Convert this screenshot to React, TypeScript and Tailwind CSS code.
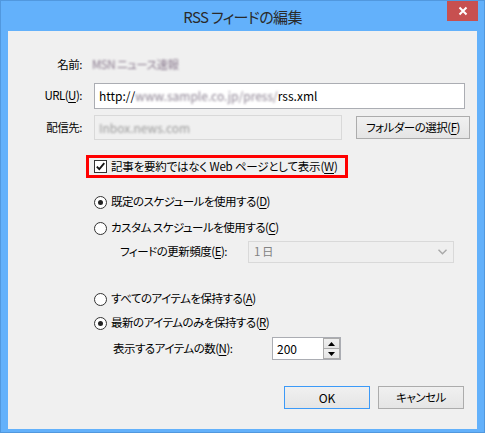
import React from "react";

function U({ children }: { children: React.ReactNode }) {
  return <span className="underline underline-offset-[2px]">{children}</span>;
}

function Radio({ checked, children }: { checked?: boolean; children: React.ReactNode }) {
  return (
    <div className="ml-[86px] h-[20px] flex items-center">
      <div className="w-[13px] h-[13px] shrink-0 rounded-full border border-[#333] bg-white flex items-center justify-center">
        {checked && <div className="w-[5px] h-[5px] rounded-full bg-[#222]" />}
      </div>
      <span className="ml-[4px] whitespace-nowrap">{children}</span>
    </div>
  );
}

function Btn({ children, def, w }: { children: React.ReactNode; def?: boolean; w: string }) {
  return (
    <div
      className={
        (def ? "border-[#3c9af8] " : "border-[#acacac] ") +
        w +
        " h-[23px] border bg-linear-to-b from-[#f0f0f0] to-[#e5e5e5] flex items-center justify-center whitespace-nowrap"
      }
    >
      {children}
    </div>
  );
}

export default function App() {
  return (
    <div className="w-[485px] h-[433px] bg-[#63b1fb] border border-[#5198de] flex flex-col font-['Noto_Sans_CJK_JP','Noto_Sans',sans-serif] [font-feature-settings:'palt'] text-[11.5px] tracking-[-0.5px] text-black leading-none">
      <div className="h-[30px] grid grid-cols-[1fr_auto_1fr] items-start shrink-0">
        <div />
        <div className="text-[15px] tracking-[-0.6px] leading-[32px] text-[#2a2a2a]">RSS フィードの編集</div>
        <div className="flex justify-end pr-[6px]">
          <div className="w-[31px] h-[20px] bg-[#c75050] flex items-center justify-center">
            <svg width="10" height="10" viewBox="0 0 10 10">
              <path d="M1.5 1.5 L8.5 8.5 M8.5 1.5 L1.5 8.5" stroke="white" strokeWidth="2" />
            </svg>
          </div>
        </div>
      </div>
      <div className="mx-[7px] mb-[3px] flex-1 bg-[#f0f0f0] flex flex-col pt-[24px]">
        {/* 名前 */}
        <div className="h-[20px] flex items-center">
          <div className="w-[74px] text-right">名前:</div>
          <div className="ml-[10px] text-[#8a7a8e] blur-[1.2px]">MSN ニュース速報</div>
        </div>
        {/* URL */}
        <div className="mt-[8px] h-[26px] flex items-center">
          <div className="w-[74px] text-right">
            URL(<U>U</U>):
          </div>
          <div className="ml-[12px] w-[371px] h-[26px] bg-white border border-[#abadb3] flex items-center pl-[4px] text-[12px] tracking-normal">
            <span>http://</span>
            <span className="text-[#8c8292] blur-[1.3px]">www.sample.co.jp/press/</span>
            <span>rss.xml</span>
          </div>
        </div>
        {/* 配信先 */}
        <div className="mt-[6px] h-[25px] flex items-center">
          <div className="w-[74px] text-right">配信先:</div>
          <div className="ml-[12px] w-[248px] h-[25px] bg-[#f0f0f0] border border-[#d9d9d9] flex items-center pl-[4px] text-[12px] tracking-normal">
            <span className="text-[#9a9a9a] blur-[1.3px]">Inbox.news.com</span>
          </div>
          <div className="ml-[14px]">
            <Btn w="w-[114px]">
              フォルダーの選択(<U>F</U>)
            </Btn>
          </div>
        </div>
        {/* red box */}
        <div className="mt-[15px] ml-[78px] w-[262px] h-[23px] border-[3px] border-[#ff0000] flex items-center pl-[5px]">
          <div className="w-[13px] h-[13px] shrink-0 border border-[#333] bg-white flex items-center justify-center">
            <svg width="11" height="11" viewBox="0 0 11 11">
              <path d="M1.8 5.6 L4.3 8.2 L9.3 2.2" stroke="#111" strokeWidth="1.8" fill="none" />
            </svg>
          </div>
          <span className="ml-[4px] whitespace-nowrap tracking-[-0.2px]">
            記事を要約ではなく Web ページとして表示(<U>W</U>)
          </span>
        </div>
        <div className="mt-[14px]">
          <Radio checked>
            既定のスケジュールを使用する(<U>D</U>)
          </Radio>
        </div>
        <div className="mt-[6px]">
          <Radio>
            カスタム スケジュールを使用する(<U>C</U>)
          </Radio>
        </div>
        {/* select */}
        <div className="mt-[3px] h-[22px] flex items-center">
          <div className="ml-[112px] w-[128px] whitespace-nowrap">
            フィードの更新頻度(<U>E</U>):
          </div>
          <div className="w-[206px] h-[22px] border border-[#d9d9d9] bg-[#efefef] flex items-center justify-between pl-[5px] pr-[6px] text-[#838383]">
            <span>1 日</span>
            <svg width="9" height="6" viewBox="0 0 9 6">
              <path d="M0.5 0.8 L4.5 4.8 L8.5 0.8" stroke="#a8a8a8" strokeWidth="1.4" fill="none" />
            </svg>
          </div>
        </div>
        <div className="mt-[26px]">
          <Radio>
            すべてのアイテムを保持する(<U>A</U>)
          </Radio>
        </div>
        <div className="mt-[4px]">
          <Radio checked>
            最新のアイテムのみを保持する(<U>R</U>)
          </Radio>
        </div>
        {/* spin */}
        <div className="mt-[4px] h-[23px] flex items-center">
          <div className="ml-[105px] w-[159px] whitespace-nowrap">
            表示するアイテムの数(<U>N</U>):
          </div>
          <div className="w-[69px] h-[23px] bg-white border border-[#abadb3] flex">
            <div className="flex-1 flex items-center pl-[4px] text-[12px] tracking-normal">200</div>
            <div className="w-[17px] flex flex-col">
              <div className="flex-1 border border-[#acacac] bg-linear-to-b from-[#f0f0f0] to-[#e5e5e5] flex items-center justify-center">
                <svg width="7" height="4" viewBox="0 0 7 4">
                  <path d="M3.5 0 L7 4 L0 4 Z" fill="#000" />
                </svg>
              </div>
              <div className="flex-1 border border-t-0 border-[#acacac] bg-linear-to-b from-[#f0f0f0] to-[#e5e5e5] flex items-center justify-center">
                <svg width="7" height="4" viewBox="0 0 7 4">
                  <path d="M0 0 L7 0 L3.5 4 Z" fill="#000" />
                </svg>
              </div>
            </div>
          </div>
        </div>
        {/* buttons */}
        <div className="mt-[26px] flex pl-[276px] gap-[8px]">
          <Btn def w="w-[86px]">
            <span className="text-[12px] tracking-normal">OK</span>
          </Btn>
          <Btn w="w-[86px]">キャンセル</Btn>
        </div>
      </div>
    </div>
  );
}
